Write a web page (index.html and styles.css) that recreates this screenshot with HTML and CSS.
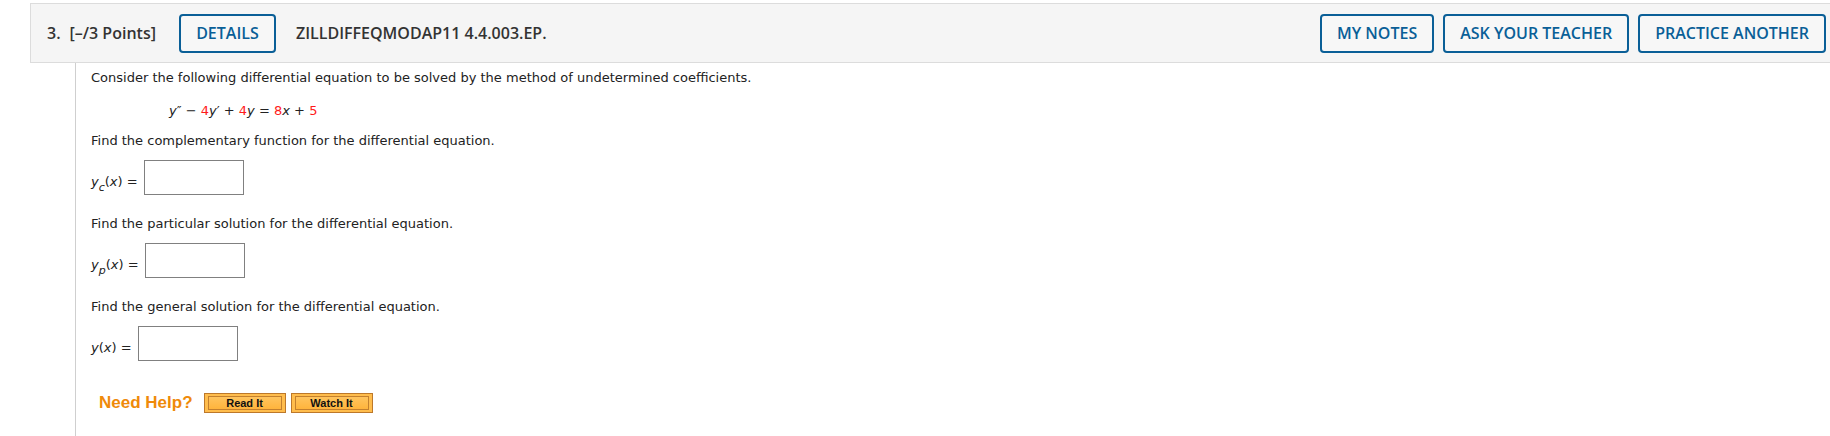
FILE: index.html
```html
<!DOCTYPE html>
<html lang="en">
<head>
<meta charset="utf-8">
<title>Question 3</title>
<link rel="stylesheet" href="styles.css">
</head>
<body>
<div class="question">
  <div class="qhead">
    <span class="qnum">3.</span>
    <span class="qpoints">[–/3 Points]</span>
    <button class="hbtn details">DETAILS</button>
    <span class="qtitle">ZILLDIFFEQMODAP11 4.4.003.EP.</span>
    <div class="hactions">
      <button class="hbtn">MY NOTES</button>
      <button class="hbtn">ASK YOUR TEACHER</button>
      <button class="hbtn">PRACTICE ANOTHER</button>
    </div>
  </div>
  <div class="qbody">
    <p class="line first">Consider the following differential equation to be solved by the method of undetermined coefficients.</p>
    <p class="line eq"><i>y</i>″ − <span class="red">4</span><i>y</i>′ + <span class="red">4</span><i>y</i> = <span class="red">8</span><i>x</i> + <span class="red">5</span></p>
    <p class="line step">Find the complementary function for the differential equation.</p>
    <div class="answer">
      <span class="lbl"><i>y</i><sub><i>c</i></sub>(<i>x</i>) =</span>
      <span class="box"></span>
    </div>
    <p class="line step2">Find the particular solution for the differential equation.</p>
    <div class="answer">
      <span class="lbl"><i>y</i><sub><i>p</i></sub>(<i>x</i>) =</span>
      <span class="box"></span>
    </div>
    <p class="line step2">Find the general solution for the differential equation.</p>
    <div class="answer">
      <span class="lbl"><i>y</i>(<i>x</i>) =</span>
      <span class="box"></span>
    </div>
    <div class="help">
      <span class="needhelp">Need Help?</span>
      <span class="hlp"><span>Read It</span></span>
      <span class="hlp"><span>Watch It</span></span>
    </div>
  </div>
</div>
</body>
</html>
```
FILE: styles.css
```css
html, body {
  margin: 0;
  padding: 0;
  background: #fff;
}
.question {
  padding: 3px 0 0 30px;
}
.qhead {
  display: flex;
  align-items: center;
  background: #f5f5f5;
  border: 1px solid #dcdcdc;
  border-right: none;
  height: 58px;
  padding: 0 4px 0 16px;
  font-family: "Open Sans", sans-serif;
  font-size: 16px;
  color: #333;
}
.qnum {
  font-weight: 600;
  margin-right: 9px;
}
.qpoints {
  font-weight: 600;
  margin-right: 23px;
}
.qtitle {
  font-weight: 600;
  margin-left: 20px;
}
.hactions {
  margin-left: auto;
  display: flex;
  gap: 9px;
}
.hbtn {
  font-family: "Open Sans", sans-serif;
  font-size: 16px;
  font-weight: 600;
  color: #0a5f97;
  background: #f7f7f7;
  border: 2px solid #0a5f97;
  border-radius: 4px;
  height: 39px;
  padding: 0 15px;
  line-height: 35px;
}
.details {
  width: 97px;
  padding: 0;
}
.qbody {
  margin-left: 45px;
  border-left: 1px solid #cfcfcf;
  padding: 6px 0 24px 15px;
  font-family: "DejaVu Sans", Verdana, sans-serif;
  font-size: 13px;
  color: #222;
}
.line {
  margin: 0;
  line-height: 18px;
}
.eq {
  margin-top: 15px;
  padding-left: 78px;
}
.step {
  margin-top: 12px;
}
.step2 {
  margin-top: 20px;
}
.red {
  color: #ff1a1a;
}
.answer {
  display: flex;
  align-items: center;
  margin-top: 10px;
  height: 35px;
}
.lbl {
  padding-top: 8px;
  margin-right: 6px;
  line-height: 18px;
}
.lbl sub {
  font-size: 11px;
  vertical-align: -5px;
  line-height: 0;
}
.box {
  display: block;
  width: 98px;
  height: 33px;
  border: 1px solid #808080;
  background: #fff;
}
.help {
  display: flex;
  align-items: center;
  margin-top: 32px;
  padding-left: 8px;
  height: 20px;
}
.needhelp {
  font-family: "Liberation Sans", Arial, sans-serif;
  font-weight: bold;
  font-size: 17px;
  color: #ef8a0a;
  margin-right: 11px;
}
.hlp {
  display: flex;
  box-sizing: border-box;
  width: 82px;
  height: 20px;
  border: 1px solid #bd782a;
  background: #ffbd4d;
  padding: 2px 3px;
  margin-right: 5px;
}
.hlp span {
  flex: 1;
  border: 1px solid #c4802d;
  background: linear-gradient(#ffc45e, #ffb43c);
  font-family: "Liberation Sans", Arial, sans-serif;
  font-weight: bold;
  font-size: 11px;
  line-height: 12px;
  text-align: center;
  color: #111;
}
```
